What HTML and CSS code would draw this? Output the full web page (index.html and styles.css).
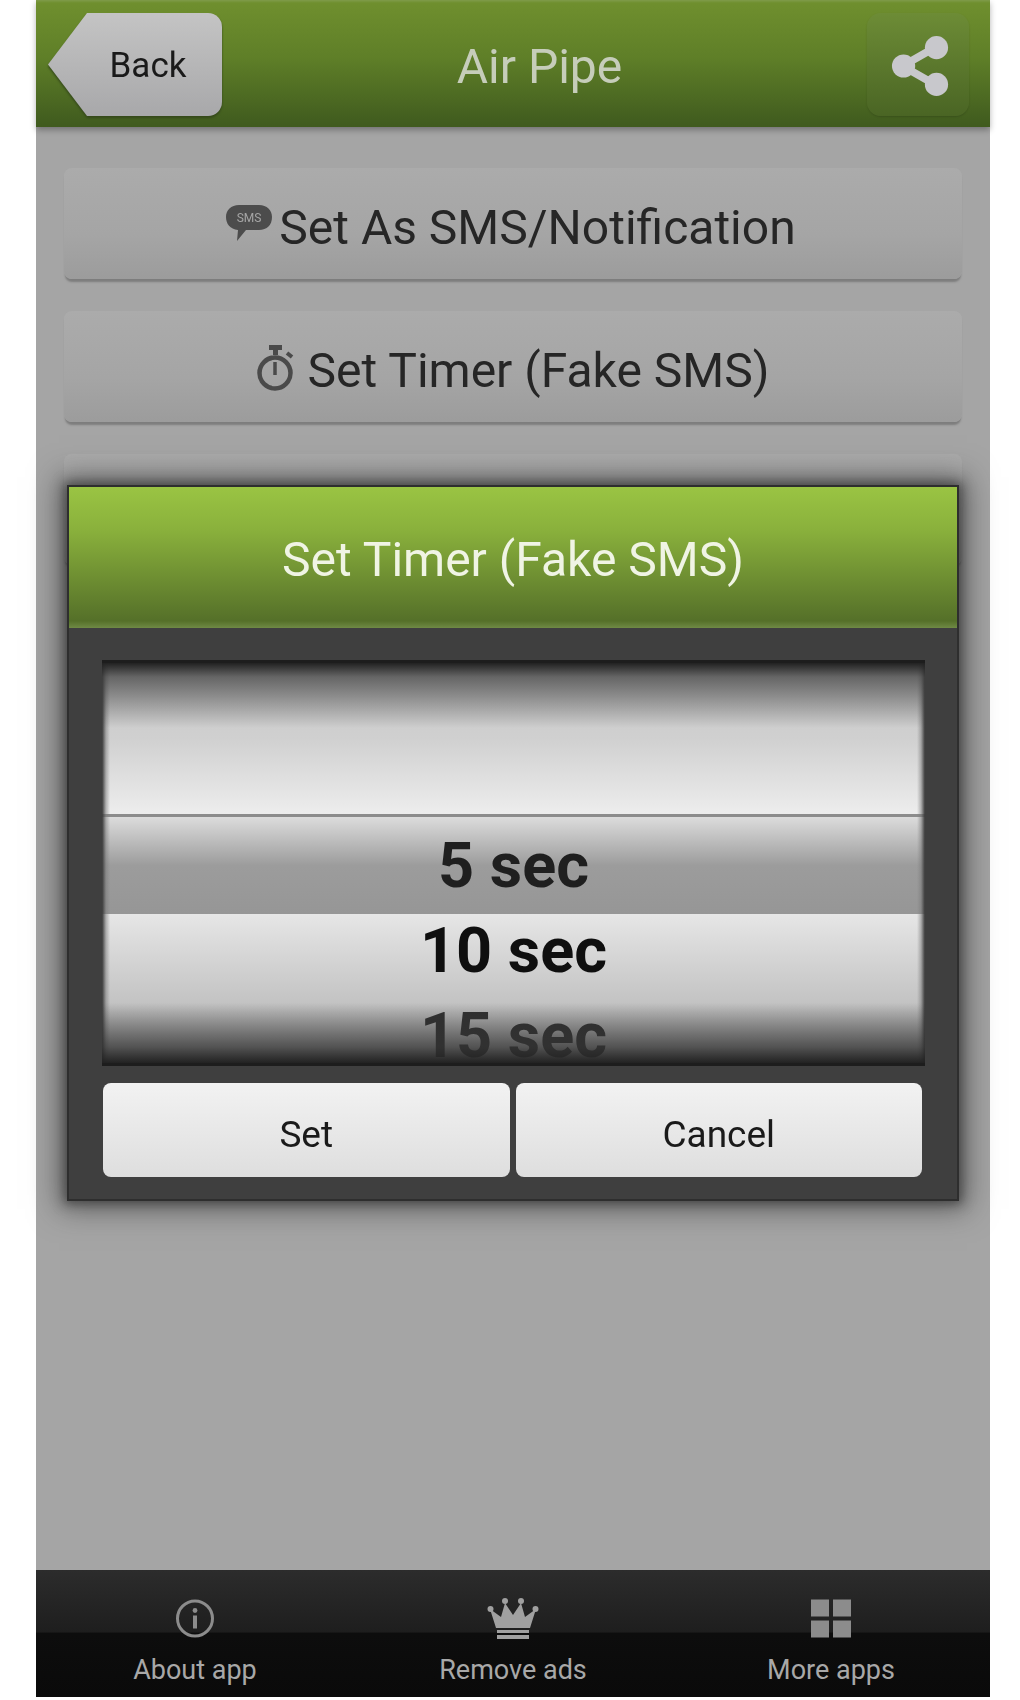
FILE: index.html
```html
<!DOCTYPE html>
<html lang="en">
<head>
  <meta charset="UTF-8" />
  <title>Air Pipe</title>
  <link rel="stylesheet" href="styles.css">
</head>
<body>
  <div class="app">
    <header class="topbar">
      <div class="back-wrap"><button class="back">Back</button></div>
      <h1 class="title">Air Pipe</h1>
      <button class="share">
        <svg width="60" height="60" viewBox="0 0 60 62">
          <path d="M46 11 L11 31 L46 51" fill="none" stroke="#c8c8cc" stroke-width="8"/>
          <circle cx="46" cy="12" r="12" fill="#c8c8cc"/>
          <circle cx="12" cy="31" r="12" fill="#c8c8cc"/>
          <circle cx="46" cy="50" r="12" fill="#c8c8cc"/>
        </svg>
      </button>
    </header>

    <main class="content">
      <button class="action action-sms">
        <svg class="sms-icon" width="46" height="36" viewBox="0 0 46 36">
          <path d="M13 0 H33 C41 0 46 5 46 12 C46 20 41 25 33 25 H20 L11 36 L12 25 C4 24 0 19 0 12 C0 5 5 0 13 0 Z" fill="#4c4c4c"/>
          <text x="23" y="17" text-anchor="middle" class="sms-text">SMS</text>
        </svg>
        Set As SMS/Notification
      </button>
      <button class="action">
        <svg class="timer-icon" width="37" height="47" viewBox="0 0 37 47">
          <rect x="12" y="0" width="13" height="5" fill="#4a4a4a"/>
          <rect x="16" y="4" width="5" height="6" fill="#4a4a4a"/>
          <path d="M30 8 L35 12" stroke="#4a4a4a" stroke-width="4"/>
          <circle cx="18" cy="28" r="15.5" fill="none" stroke="#4a4a4a" stroke-width="4.5"/>
          <path d="M18 17 V30" stroke="#4a4a4a" stroke-width="3.5"/>
        </svg>
        Set Timer (Fake SMS)
      </button>
      <button class="action"></button>

      <section class="dialog">
        <h2 class="dialog-title">Set Timer (Fake SMS)</h2>
        <div class="dialog-body">
          <div class="picker">
            <div class="row-blank"></div>
            <div class="row-sel"><span>5 sec</span></div>
            <div class="row-rest">
              <div class="item">10 sec</div>
              <div class="item item-faded">15 sec</div>
            </div>
            <div class="shade"></div>
          </div>
          <div class="dialog-btns">
            <button class="dialog-btn">Set</button>
            <button class="dialog-btn">Cancel</button>
          </div>
        </div>
      </section>
    </main>

    <footer class="bottombar">
      <div class="tab">
        <svg width="40" height="40" viewBox="0 0 40 40">
          <circle cx="20" cy="20" r="17.5" fill="none" stroke="#8c8c8c" stroke-width="3"/>
          <rect x="18" y="17" width="4" height="13" fill="#8c8c8c"/>
          <circle cx="20" cy="12" r="2.4" fill="#8c8c8c"/>
        </svg>
        <span>About app</span>
      </div>
      <div class="tab">
        <svg width="52" height="43" viewBox="0 0 52 43">
          <path d="M9 31 L3 12 L14 20 L18 6 L26 18 L34 6 L38 20 L49 12 L43 31 Z" fill="#a0a0a0"/>
          <circle cx="3.5" cy="12" r="3" fill="#a0a0a0"/>
          <circle cx="18" cy="4" r="3" fill="#a0a0a0"/>
          <circle cx="34" cy="4" r="3" fill="#a0a0a0"/>
          <circle cx="48.5" cy="12" r="3" fill="#a0a0a0"/>
          <rect x="10" y="33" width="32" height="3" fill="#a0a0a0"/>
          <rect x="10" y="38" width="32" height="4" fill="#a0a0a0"/>
        </svg>
        <span>Remove ads</span>
      </div>
      <div class="tab">
        <svg width="40" height="40" viewBox="0 0 40 40">
          <rect x="0" y="1" width="18" height="17" fill="#8c8c8c"/>
          <rect x="22" y="1" width="18" height="17" fill="#8c8c8c"/>
          <rect x="0" y="22" width="18" height="17" fill="#8c8c8c"/>
          <rect x="22" y="22" width="18" height="17" fill="#8c8c8c"/>
        </svg>
        <span>More apps</span>
      </div>
    </footer>
  </div>
</body>
</html>
```

FILE: styles.css
```css
body {
  margin: 0;
  background: #fff;
  font-family: Roboto, "Liberation Sans", sans-serif;
}
button {
  font-family: inherit;
  border: none;
  padding: 0;
}
.app {
  margin-left: 36px;
  width: 954px;
  height: 1697px;
  display: flex;
  flex-direction: column;
  background: #a5a5a5;
  filter: blur(.5px);
}

/* top bar */
.topbar {
  height: 127px;
  box-sizing: border-box;
  padding: 13px 21px 11px 12px;
  display: flex;
  align-items: stretch;
  background: linear-gradient(#7f9b4a 0, #6f8f2e 3px, #5f7f28 45%, #3f5a1e 100%);
  box-shadow: 0 3px 6px rgba(0, 0, 0, .3);
  position: relative;
}
.back-wrap {
  filter: drop-shadow(0 2px 1px #34481a);
}
.back {
  width: 174px;
  height: 103px;
  padding: 2px 0 0 26px;
  font-size: 35px;
  color: #1a1a1a;
  background: linear-gradient(#c4c4c4, #a8a8aa);
  border-radius: 0 14px 14px 0;
  clip-path: polygon(0 50%, 39px 0, 100% 0, 100% 100%, 39px 100%);
}
.title {
  flex: 1;
  margin: 0;
  padding: 3px 10px 0 0;
  align-self: center;
  text-align: center;
  font-size: 48px;
  font-weight: 400;
  color: #c6cdba;
}
.share {
  width: 102px;
  height: 103px;
  padding: 2px 0 0 6px;
  border-radius: 14px;
  background: linear-gradient(#6d8c36, #4a6524);
  box-shadow: 0 1px 2px rgba(0, 0, 0, .15);
  display: flex;
  align-items: center;
  justify-content: center;
}

/* main list, dialog sits over it */
.content {
  flex: 1;
  position: relative;
  padding: 41px 28px 0;
  display: flex;
  flex-direction: column;
  gap: 32px;
}
.action {
  height: 111px;
  flex: none;
  padding-top: 8px;
  border-radius: 8px;
  background: linear-gradient(#ababab, #a5a5a5 60%, #9c9c9c);
  box-shadow: 0 4px 2px -1px #7d7d7d;
  font-size: 48px;
  color: #262626;
  display: flex;
  align-items: center;
  justify-content: center;
  gap: 9px;
}
.action-sms {
  padding-right: 4px;
}
.sms-icon {
  margin: -10px -2px 0 0;
}
.sms-text {
  font-size: 12px;
  fill: #a5a5a5;
}
.timer-icon {
  margin: -4px 5px 0 0;
}

.dialog {
  position: absolute;
  left: 31px;
  top: 358px;
  width: 892px;
  background: #3f3f3f;
  box-shadow: 0 0 10px 3px rgba(30, 30, 30, .5), 0 0 28px 8px rgba(40, 40, 40, .55);
  border: 2px solid #2e2e2e;
  box-sizing: border-box;
}
.dialog-title {
  margin: 0;
  height: 141px;
  line-height: 145px;
  text-align: center;
  font-size: 48px;
  font-weight: 400;
  color: #f0f4e4;
  background: linear-gradient(#9ac443, #8ab13c 30%, #557029 95%, #6f8a45);
}
.dialog-body {
  padding: 32px 32px 22px 33px;
}

/* wheel picker */
.picker {
  position: relative;
  height: 406px;
  overflow: hidden;
  box-sizing: border-box;
  border-top: 3px solid #1d1d1d;
  border-bottom: 3px solid #1d1d1d;
}
.row-blank {
  height: 151px;
  border-bottom: 3px solid #8c8c8c;
  background: linear-gradient(#c6c6c6, #d0d0d0 50%, #ededed);
}
.row-sel {
  height: 97px;
  background: linear-gradient(#dcdcdc, #9c9c9c 50%, #969696);
  text-align: center;
  color: #1f1f1f;
}
.row-sel span {
  display: block;
  font-size: 63px;
  font-weight: 700;
  line-height: 97px;
}
.row-rest {
  height: 149px;
  background: linear-gradient(#e6e6e6, #bdbdbd 70%, #b0b0b0);
  text-align: center;
}
.item {
  height: 85px;
  line-height: 74px;
  font-size: 63px;
  font-weight: 700;
  color: #0f0f0f;
}
.item-faded {
  color: #2f2f2f;
}
.shade {
  position: absolute;
  inset: 0;
  background:
    linear-gradient(#222 0, rgba(60, 60, 60, .7) 14px, rgba(120, 120, 120, 0) 65px),
    linear-gradient(to top, #222 0, rgba(50, 50, 50, .75) 16px, rgba(110, 110, 110, 0) 60px),
    linear-gradient(to right, #3a3a3a 0, rgba(120, 120, 120, .5) 4px, transparent 8px),
    linear-gradient(to left, #3a3a3a 0, rgba(120, 120, 120, .5) 4px, transparent 8px);
}

.dialog-btns {
  display: flex;
  gap: 6px;
  margin: 17px 3px 0 1px;
}
.dialog-btn {
  flex: 1;
  height: 94px;
  padding-top: 8px;
  border-radius: 8px;
  font-size: 37px;
  color: #1a1a1a;
  background: linear-gradient(#f2f2f2, #dedede);
}

/* bottom bar */
.bottombar {
  height: 127px;
  display: flex;
  background: linear-gradient(#2c2c2c, #1e1e1e 49%, #0d0d0d 49.5%, #0a0a0a);
}
.tab {
  flex: 1;
  display: flex;
  flex-direction: column;
  align-items: center;
  padding-top: 27px;
  gap: 14px;
  color: #a8a8a8;
  font-size: 27px;
}
.tab svg {
  height: 43px;
}
```
